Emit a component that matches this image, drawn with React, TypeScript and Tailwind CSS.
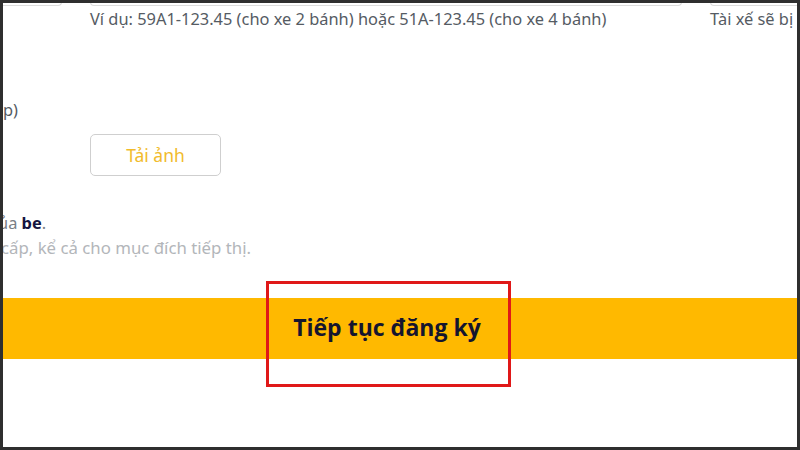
import React from "react";

const font = { fontFamily: '"Noto Sans", "Open Sans", sans-serif' };

const App = () => (
  <div className="w-[800px] h-[450px] bg-[#2f2f2f] pt-[3px] pl-[3px] pr-[3px] pb-[3px] flex" style={font}>
    <div className="relative flex-1 bg-white overflow-hidden flex flex-col">
      {/* bottoms of the inputs above */}
      <div className="flex h-[4px] gap-[28px] -mt-[1px]">
        <div className="w-[59px] shrink-0 border-b border-r border-[#dcdcdc] rounded-br-[5px]" />
        <div className="w-[592px] shrink-0 border-b border-x border-[#dcdcdc] rounded-b-[5px]" />
        <div className="flex-1 border-b border-l border-[#dcdcdc] rounded-bl-[5px]" />
      </div>
      <div className="flex mt-[3px] text-[16.4px] leading-[20px] text-[#555b63] whitespace-nowrap">
        <div className="w-[87px] shrink-0" />
        <div className="w-[620px] shrink-0">Ví dụ: 59A1-123.45 (cho xe 2 bánh) hoặc 51A-123.45 (cho xe 4 bánh)</div>
        <div className="shrink-0">Tài xế sẽ bị từ chối</div>
      </div>

      <div className="mt-[71px] text-[16.4px] leading-[20px] text-[#555b63]">p)</div>

      <div className="pl-[87px] mt-[14px]">
        <button className="w-[131px] h-[42px] border-[1.5px] border-[#cfcfcf] rounded-[5px] text-[17.5px] text-[#f1bb2c] bg-white">
          Tải ảnh
        </button>
      </div>

      <div className="mt-[37px] text-[16.4px] leading-[20px] text-[#7a7f86] whitespace-nowrap -ml-[5px]">
        ủa <span className="font-bold text-[#151540]">be</span>.
      </div>
      <div className="mt-[5px] text-[16.8px] leading-[20px] text-[#b3b6ba] whitespace-nowrap -ml-[2px]">
        cấp, kể cả cho mục đích tiếp thị.
      </div>

      <div className="mt-[40px] h-[61px] bg-[#ffb900] flex items-center justify-center pr-[26px] pb-[2px]">
        <span className="text-[23px] font-bold text-[#15152e]" style={{ fontFamily: '"Open Sans", "Noto Sans", sans-serif' }}>
          Tiếp tục đăng ký
        </span>
      </div>

      {/* red highlight box */}
      <div className="absolute left-[263px] top-[278px] w-[245px] h-[106px] border-[3px] border-[#e01818]" />
    </div>
  </div>
);

export default App;
